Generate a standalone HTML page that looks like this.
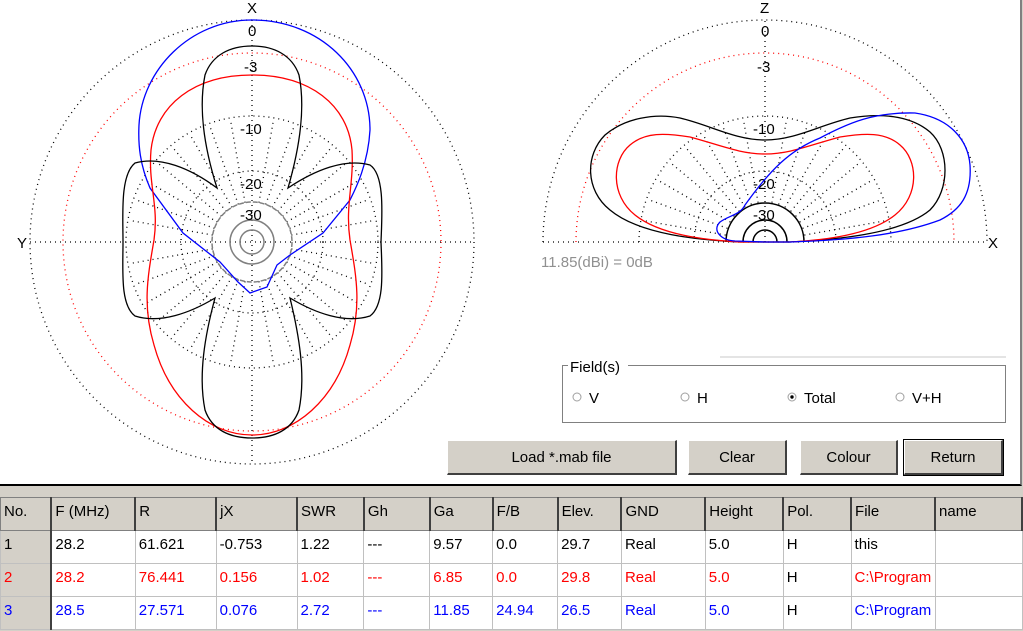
<!DOCTYPE html>
<html><head><meta charset="utf-8"><style>
body{margin:0;width:1023px;height:631px;overflow:hidden;background:#d4d0c8;font-family:"Liberation Sans",sans-serif;}
#top{position:absolute;left:0;top:0;width:1020px;height:484px;background:#fff;border-bottom:2px solid #000;border-right:2px solid #808080;}
.btn{position:absolute;top:440px;height:35px;background:#d4d0c8;border-top:1px solid #fff;border-left:1px solid #fff;border-right:2px solid #404040;border-bottom:2px solid #404040;box-sizing:border-box;font-size:15px;text-align:center;line-height:33px;color:#000}
table{position:absolute;left:0;top:497px;border-collapse:collapse;font-size:15px;}
td{height:33px;border:1px solid #c0c0c0;padding:0 0 0 3px;box-sizing:border-box;vertical-align:top;padding-top:5px;background:#fff}
tr.h td{background:#d4d0c8;border:1px solid #808080;border-right:2px solid #404040;}
td.n{background:#d4d0c8;border-right:2px solid #404040;}
.r td{color:#f00}.b td{color:#00f}
</style></head><body>
<div id="top">
<svg width="1020" height="484" style="position:absolute;left:0;top:0" font-family="Liberation Sans" font-size="15">
<defs><line id="L" x1="252" y1="202" x2="252" y2="117"/></defs>
<g fill="none" stroke="#000" stroke-width="1.3" stroke-dasharray="1 4">
<circle cx="252" cy="242" r="222"/><circle cx="252" cy="242" r="126"/><circle cx="252" cy="242" r="71"/>
<circle cx="252" cy="242" r="189" stroke="#f00"/>
<line x1="30" y1="242" x2="474" y2="242"/><line x1="252" y1="20" x2="252" y2="464"/>
<g>
<use href="#L" transform="rotate(10 252 242)"/><use href="#L" transform="rotate(20 252 242)"/><use href="#L" transform="rotate(30 252 242)"/><use href="#L" transform="rotate(40 252 242)"/><use href="#L" transform="rotate(50 252 242)"/><use href="#L" transform="rotate(60 252 242)"/><use href="#L" transform="rotate(70 252 242)"/><use href="#L" transform="rotate(80 252 242)"/><use href="#L" transform="rotate(100 252 242)"/><use href="#L" transform="rotate(110 252 242)"/><use href="#L" transform="rotate(120 252 242)"/><use href="#L" transform="rotate(130 252 242)"/><use href="#L" transform="rotate(140 252 242)"/><use href="#L" transform="rotate(150 252 242)"/><use href="#L" transform="rotate(160 252 242)"/><use href="#L" transform="rotate(170 252 242)"/><use href="#L" transform="rotate(190 252 242)"/><use href="#L" transform="rotate(200 252 242)"/><use href="#L" transform="rotate(210 252 242)"/><use href="#L" transform="rotate(220 252 242)"/><use href="#L" transform="rotate(230 252 242)"/><use href="#L" transform="rotate(240 252 242)"/><use href="#L" transform="rotate(250 252 242)"/><use href="#L" transform="rotate(260 252 242)"/><use href="#L" transform="rotate(280 252 242)"/><use href="#L" transform="rotate(290 252 242)"/><use href="#L" transform="rotate(300 252 242)"/><use href="#L" transform="rotate(310 252 242)"/><use href="#L" transform="rotate(320 252 242)"/><use href="#L" transform="rotate(330 252 242)"/><use href="#L" transform="rotate(340 252 242)"/><use href="#L" transform="rotate(350 252 242)"/>
</g>
<path d="M543,242 A222,222 0 0 1 987,242 M639,242 A126,126 0 0 1 891,242 M694,242 A71,71 0 0 1 836,242 M543,242 L987,242 M765,242 L765,20"/>
<path d="M576,242 A189,189 0 0 1 954,242" stroke="#f00"/>
<g transform="translate(513,0)">
<use href="#L" transform="rotate(10 252 242)"/><use href="#L" transform="rotate(20 252 242)"/><use href="#L" transform="rotate(30 252 242)"/><use href="#L" transform="rotate(40 252 242)"/><use href="#L" transform="rotate(50 252 242)"/><use href="#L" transform="rotate(60 252 242)"/><use href="#L" transform="rotate(70 252 242)"/><use href="#L" transform="rotate(80 252 242)"/>
<use href="#L" transform="rotate(-10 252 242)"/><use href="#L" transform="rotate(-20 252 242)"/><use href="#L" transform="rotate(-30 252 242)"/><use href="#L" transform="rotate(-40 252 242)"/><use href="#L" transform="rotate(-50 252 242)"/><use href="#L" transform="rotate(-60 252 242)"/><use href="#L" transform="rotate(-70 252 242)"/><use href="#L" transform="rotate(-80 252 242)"/>
</g>
</g>
<g fill="none" stroke="#808080" stroke-width="1.5">
<circle cx="252" cy="242" r="40" stroke-dasharray="5 2"/><circle cx="252" cy="242" r="22"/><circle cx="252" cy="242" r="12"/>
</g>
<g fill="none" stroke="#000" stroke-width="1.5">
<path d="M726,242 A39,39 0 0 1 804,242"/>
<path d="M743,242 A22,22 0 0 1 787,242 M753,242 A12,12 0 0 1 777,242"/>
</g>
<g fill="#000">
<text x="247" y="13">X</text><text x="248" y="36">0</text><text x="244" y="72">-3</text><text x="240" y="134">-10</text><text x="240" y="189">-20</text><text x="240" y="220">-30</text>
<text x="17" y="248">Y</text>
<text x="760" y="13">Z</text><text x="761" y="36">0</text><text x="757" y="72">-3</text><text x="753" y="134">-10</text><text x="753" y="189">-20</text><text x="753" y="220">-30</text>
<text x="988" y="248">X</text>
</g>
<text x="541" y="267" fill="#909090" font-size="15">11.85(dBi) = 0dB</text>
<g fill="none" stroke-width="1.3">
<path stroke="#00f" d="M252,20 C320,20 370,70 370,130 C368,165 355,190 350,200 L323,233 L290,255 L277,265 L267,287 L250,293 L238,282 L220,262 L183,233 L150,188 C140,165 138,145 139,125 C142,70 190,20 252,20Z"/>
<path stroke="#f00" d="M252,75 C310,75 348,105 352,150 C354,185 345,205 350,240 C356,275 362,305 350,345 C335,400 295,435 252,435 C209,435 169,400 154,345 C142,305 148,275 154,240 C159,205 148,185 151,150 C156,105 194,75 252,75Z"/>
<path stroke="#000" d="M217,188 C205,150 198,110 205,75 C212,55 230,46 252,46 C274,46 292,55 299,75 C306,110 299,150 288,188 C315,170 345,158 370,165 C385,175 382,215 381,242 C382,270 385,305 370,316 C345,324 315,313 290,298 C299,335 306,375 299,410 C292,430 274,438 252,438 C230,438 212,430 205,410 C198,375 205,335 215,298 C190,313 160,324 135,316 C120,305 123,270 123,242 C123,215 120,175 135,163 C160,156 190,168 217,188Z"/>
<path stroke="#000" d="M740,242 C700,240 640,235 610,210 C585,190 585,155 605,135 C625,118 655,113 680,118 C710,125 735,140 765,140 C795,140 820,125 850,118 C880,113 910,115 930,132 C950,150 950,190 930,210 C900,235 830,240 790,242 Z"/>
<path stroke="#f00" d="M740,242 C705,240 660,235 635,215 C610,195 612,160 630,145 C645,132 665,133 690,137 C720,145 740,154 765,154 C790,154 810,145 840,137 C865,133 885,132 900,145 C918,160 920,195 895,215 C870,235 825,240 790,242 Z"/>
<path stroke="#00f" d="M765,242 L735,241 C720,240 712,230 720,222 C730,215 740,215 745,205 C770,170 790,150 820,138 C850,122 875,112 915,113 C950,118 968,140 970,165 C972,195 960,210 940,220 C900,235 850,240 790,242 Z"/>
</g>
<line x1="720" y1="357" x2="1006" y2="357" stroke="#c8c8c8"/>
<rect x="562.5" y="365.5" width="443" height="57" fill="none" stroke="#808080"/>
<rect x="568" y="358" width="60" height="16" fill="#fff"/>
<text x="570" y="372" font-size="15">Field(s)</text>
<g fill="#fff" stroke="#a0a0a0"><circle cx="577" cy="397" r="4"/><circle cx="685" cy="397" r="4"/><circle cx="792" cy="397" r="4"/><circle cx="900" cy="397" r="4"/></g>
<circle cx="792" cy="397" r="1.7" fill="#000"/>
<g font-size="15"><text x="589" y="403">V</text><text x="697" y="403">H</text><text x="804" y="403">Total</text><text x="912" y="403">V+H</text></g>
</svg>
<div class="btn" style="left:447px;width:230px">Load *.mab file</div>
<div class="btn" style="left:688px;width:99px">Clear</div>
<div class="btn" style="left:800px;width:98px">Colour</div>
<div class="btn" style="left:904px;width:99px;outline:1px solid #000">Return</div>
</div>
<table>
<colgroup><col style="width:51px"><col style="width:84px"><col style="width:81px"><col style="width:81px"><col style="width:67px"><col style="width:66px"><col style="width:63px"><col style="width:65px"><col style="width:64px"><col style="width:84px"><col style="width:78px"><col style="width:68px"><col style="width:84px"><col style="width:87px"></colgroup>
<tr class="h"><td>No.</td><td>F (MHz)</td><td>R</td><td>jX</td><td>SWR</td><td>Gh</td><td>Ga</td><td>F/B</td><td>Elev.</td><td>GND</td><td>Height</td><td>Pol.</td><td>File</td><td>name</td></tr>
<tr><td class="n">1</td><td>28.2</td><td>61.621</td><td>-0.753</td><td>1.22</td><td>---</td><td>9.57</td><td>0.0</td><td>29.7</td><td>Real</td><td>5.0</td><td>H</td><td>this</td><td></td></tr>
<tr class="r"><td class="n">2</td><td>28.2</td><td>76.441</td><td>0.156</td><td>1.02</td><td>---</td><td>6.85</td><td>0.0</td><td>29.8</td><td>Real</td><td>5.0</td><td style="color:#000">H</td><td>C:\Program</td><td></td></tr>
<tr class="b"><td class="n">3</td><td>28.5</td><td>27.571</td><td>0.076</td><td>2.72</td><td>---</td><td>11.85</td><td>24.94</td><td>26.5</td><td>Real</td><td>5.0</td><td style="color:#000">H</td><td>C:\Program</td><td></td></tr>
</table>
</body></html>
